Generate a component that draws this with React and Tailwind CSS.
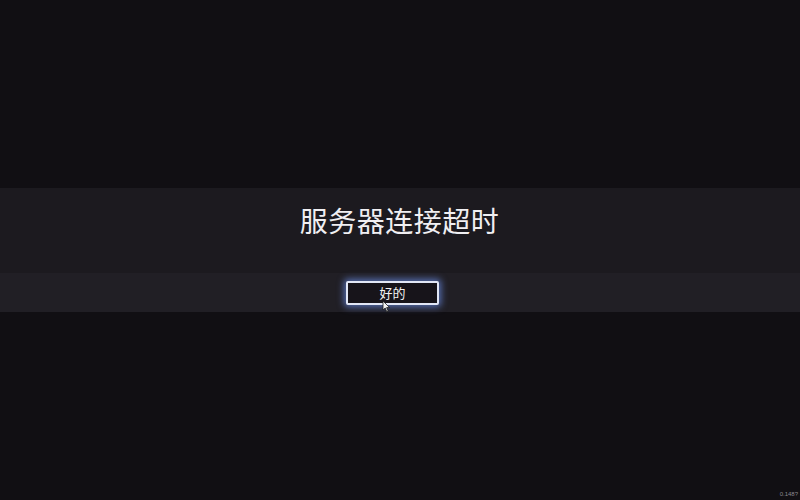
import React from "react";

const cjk = { fontFamily: '"Noto Sans CJK SC", "Noto Sans", sans-serif' };

function Pointer() {
  return (
    <svg width="9" height="13" viewBox="0 0 9 13" className="absolute left-[34px] top-[17px]">
      <path d="M1 1 L1 10 L3.2 8 L4.8 11.8 L6.2 11.2 L4.6 7.6 L7.6 7.6 Z" fill="#f2f2f2" stroke="#1a1a1a" strokeWidth="0.8" strokeLinejoin="round" />
    </svg>
  );
}

export default function App() {
  return (
    <div className="relative w-[800px] h-[500px] bg-[#110f13] flex flex-col overflow-hidden" style={cjk}>
      <div className="h-[188px]" />
      <div className="h-[85px] bg-[#1c1a1f] flex justify-center pt-[15px]">
        <h1 className="text-[28px] leading-[34px] text-[#f0eff2] tracking-[0.5px] ml-[-1px]">服务器连接超时</h1>
      </div>
      <div className="h-[39px] bg-[#211f25] flex justify-center items-center">
        <button className="relative mr-[15px] w-[93px] h-[24px] border-2 border-[#e2e7f6] rounded-[2px] bg-[#17141a] text-[13px] leading-none text-[#f2f2f2] shadow-[0_0_7px_2px_rgba(110,145,240,0.7)]">
          好的
          <Pointer />
        </button>
      </div>
      <div className="flex-1" />
      <div className="absolute right-[2px] bottom-[3px] text-[6px] leading-none text-[#8a8890]" style={{ fontFamily: '"Liberation Sans", sans-serif' }}>0.148?</div>
    </div>
  );
}
